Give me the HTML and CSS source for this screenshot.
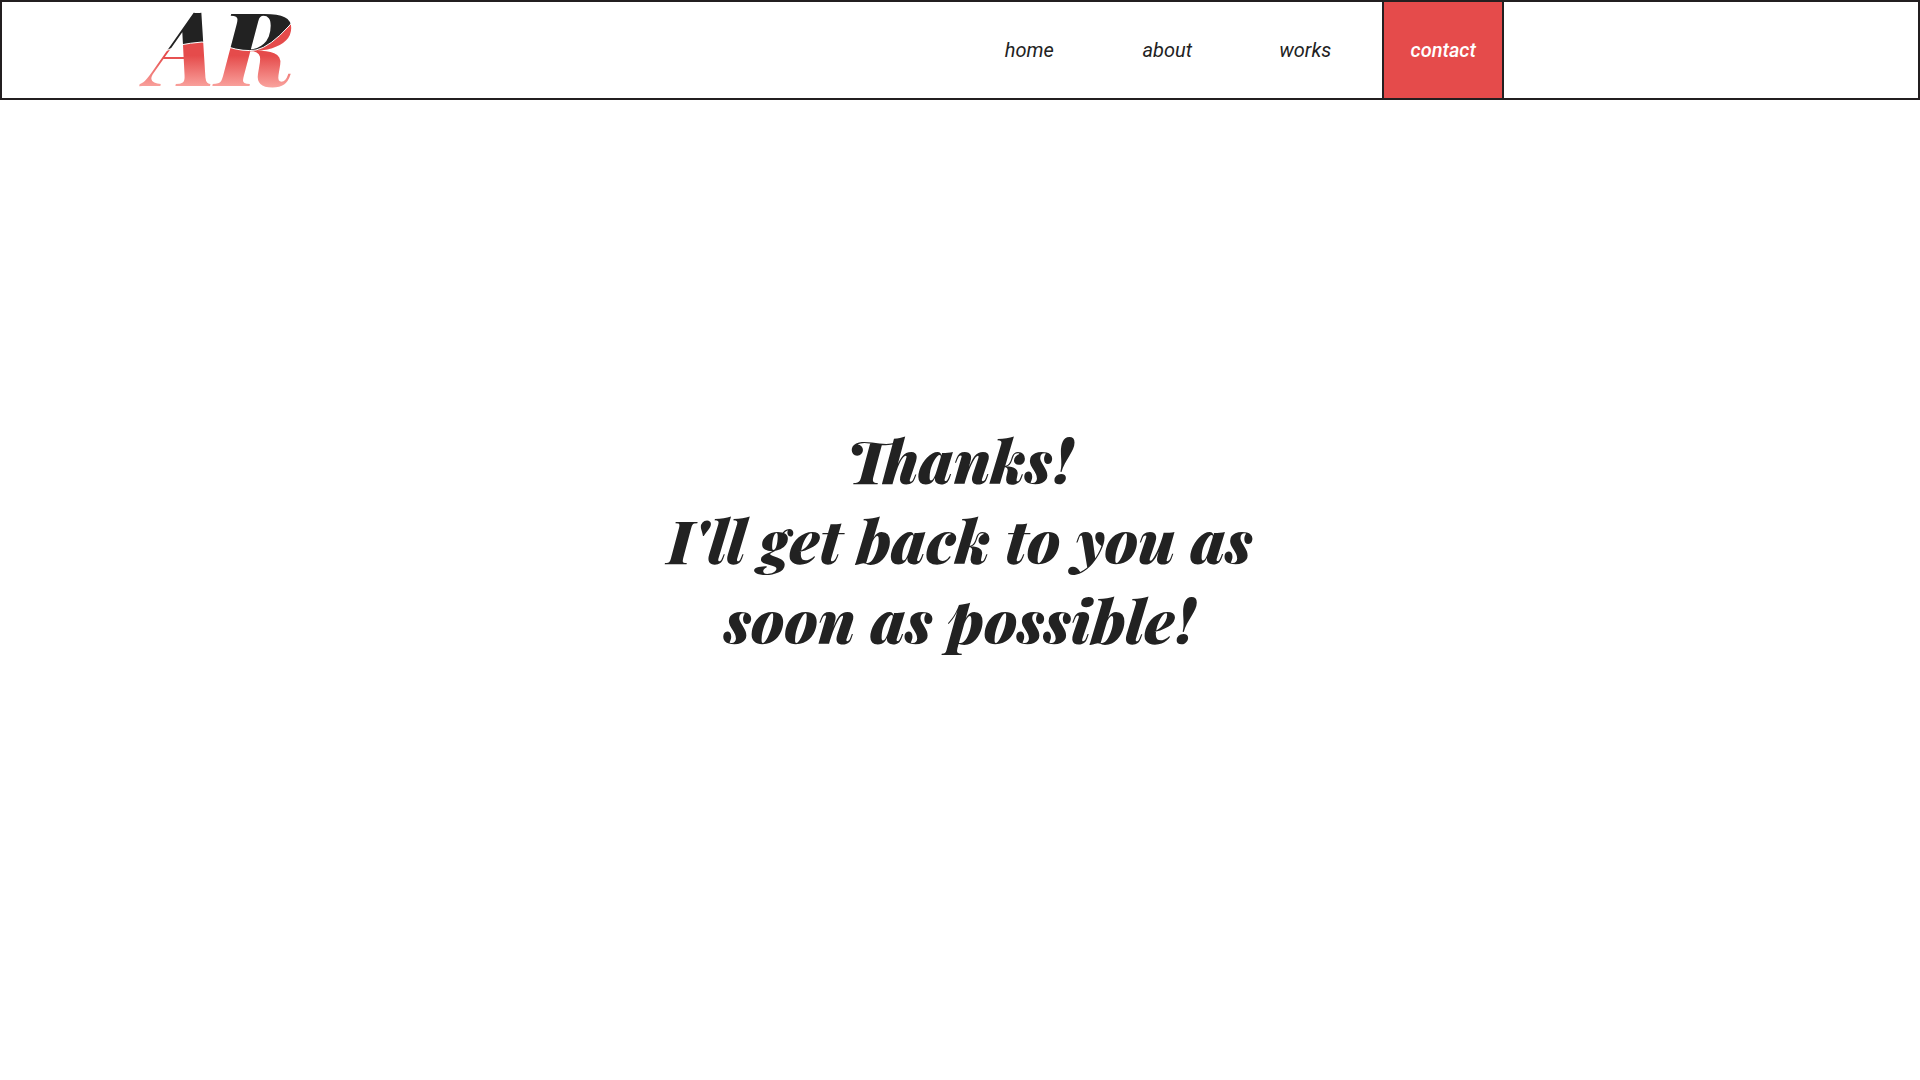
FILE: index.html
```html
<!DOCTYPE html>
<html lang="en">
<head>
<meta charset="utf-8">
<meta name="viewport" content="width=device-width, initial-scale=1">
<title>Thanks!</title>
<link rel="stylesheet" href="styles.css">
</head>
<body>
<header class="header">
  <a class="logo" href="#">
    <svg class="logo-mark" width="170" height="96" viewBox="0 0 170 96">
      <defs>
        <linearGradient id="fade" gradientUnits="userSpaceOnUse" x1="0" y1="50" x2="0" y2="86">
          <stop offset="0.1" stop-color="#e54b4b"/>
          <stop offset="1" stop-color="#faa5a0"/>
        </linearGradient>
        <pattern id="split" patternUnits="userSpaceOnUse" x="0" y="0" width="170" height="96">
          <rect width="170" height="96" fill="url(#fade)"/>
          <path d="M-4 -4V50H27L44 43Q54 41 66 40L92 45Q108 50 120 48Q134 45 153 24L174 0V-4Z" fill="#222" stroke="#fff"/>
        </pattern>
      </defs>
      <text class="logo-text" x="13" y="84" fill="url(#split)">AR</text>
    </svg>
  </a>
  <nav class="nav">
    <a class="nav-link" href="#">home</a>
    <a class="nav-link" href="#">about</a>
    <a class="nav-link" href="#">works</a>
    <a class="nav-link nav-link-active" href="#">contact</a>
  </nav>
</header>
<main class="main">
  <h1 class="message">Thanks!<br>I'll get back to you as<br>soon as possible!</h1>
</main>
</body>
</html>
```
FILE: styles.css
```css
* {
  box-sizing: border-box;
}

body {
  margin: 0;
  background: #fff;
  color: #222;
  font-family: Roboto, sans-serif;
}

.header {
  display: flex;
  justify-content: space-between;
  min-height: 100px;
  padding: 0 21.55% 0 7%;
  border: 2px solid #231f20;
}

.logo {
  display: flex;
  align-items: center;
}

.logo-mark {
  display: block;
  overflow: visible;
}

.logo-text {
  font: italic 900 102px "Playfair Display", "Liberation Serif", serif;
}

.nav {
  display: grid;
  grid-template-columns: repeat(4, 122px);
  gap: 16px;
}

.nav-link {
  display: flex;
  align-items: center;
  justify-content: center;
  color: #222;
  font-size: 20px;
  font-style: italic;
  font-weight: 400;
  text-decoration: none;
}

.nav-link-active {
  border: solid #231f20;
  border-width: 0 2px;
  background: #e54b4b;
  color: #fff;
  font-weight: 500;
}

.main {
  display: flex;
  align-items: center;
  justify-content: center;
  min-height: calc(100vh - 100px);
  padding: 0 24px 102px;
}

.message {
  margin: 0;
  font: italic 900 60px/80px "Playfair Display", "Liberation Serif", serif;
  text-align: center;
}
```
